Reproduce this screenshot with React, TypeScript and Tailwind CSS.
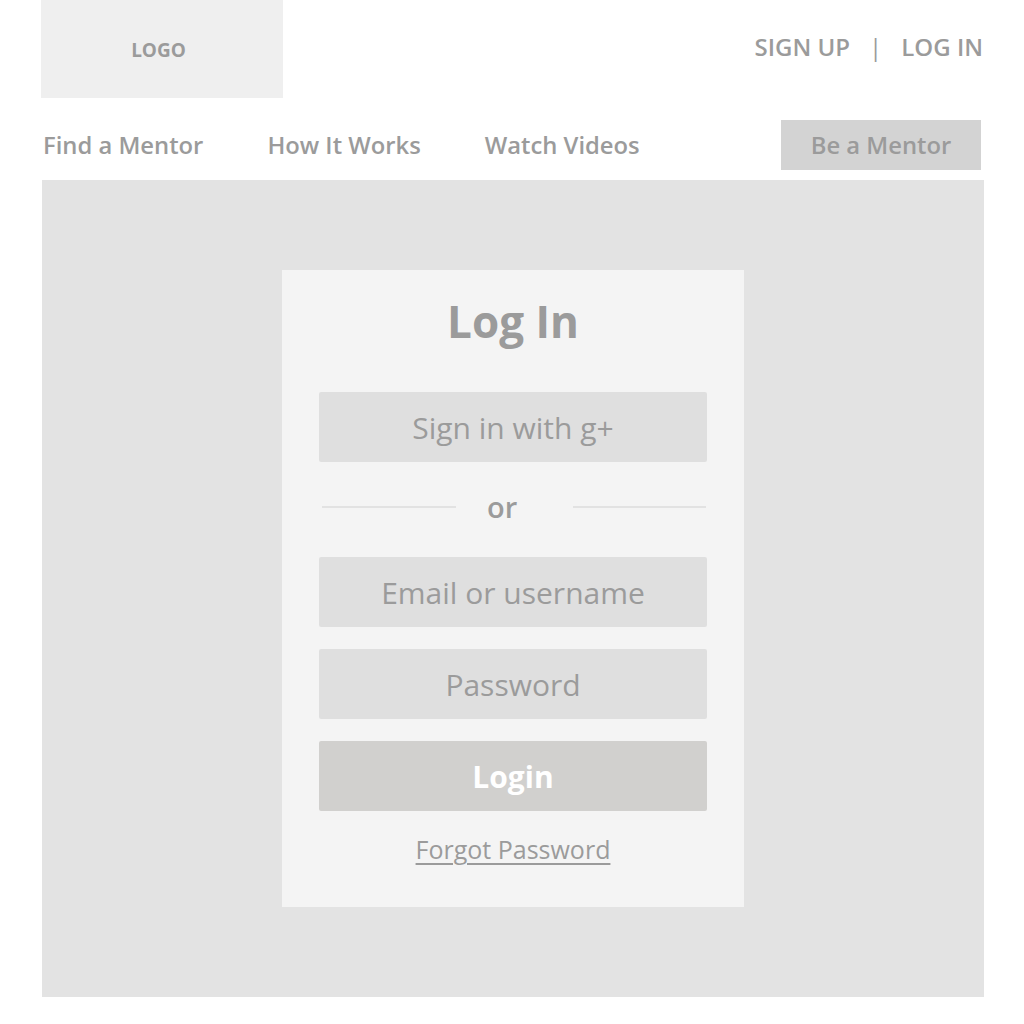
import React from 'react';

const font = { fontFamily: '"Open Sans", "Liberation Sans", sans-serif' };

const Field: React.FC<{ label: string }> = ({ label }) => (
  <div className="h-[70px] w-full bg-[#dfdfdf] rounded-[2px] flex items-center justify-center text-[30px] text-[#9b9b9b]">
    {label}
  </div>
);

export default function App() {
  return (
    <div className="min-h-[1024px] bg-white" style={font}>
      <div className="ml-[41px] w-[943px]">
        {/* top bar */}
        <header className="flex items-start justify-between">
          <div className="w-[242px] h-[98px] bg-[#efefef] flex items-center justify-center pr-[7px]">
            <span className="text-[19px] font-bold text-[#9b9b9b] pt-[2px]">LOGO</span>
          </div>
          <div className="flex items-center gap-[19px] h-[94px] mr-[1px] text-[24px] font-semibold text-[#9b9b9b]">
            <a>SIGN UP</a>
            <span className="font-normal">|</span>
            <a>LOG IN</a>
          </div>
        </header>

        {/* nav */}
        <nav className="mt-[22px] mb-[10px] h-[50px] flex items-center justify-between text-[23.8px] font-semibold text-[#9b9b9b]">
          <div className="flex items-center gap-[64px] pl-[2px] pt-[1px]">
            <a>Find a Mentor</a>
            <a>How It Works</a>
            <a>Watch Videos</a>
          </div>
          <button className="w-[200px] h-[50px] mr-[3px] pt-[1px] bg-[#d3d3d3] text-[#9b9b9b] font-semibold">
            Be a Mentor
          </button>
        </nav>

        {/* main */}
        <main className="ml-[1px] bg-[#e3e3e3] py-[90px] flex justify-center">
          <div className="w-[462px] h-[637px] bg-[#f4f4f4] px-[37px] flex flex-col">
            <h1 className="text-center text-[44px] font-bold text-[#9b9b9b] leading-none mt-[29px]">Log In</h1>
            <div className="mt-[49px]">
              <Field label="Sign in with g+" />
            </div>
            <div className="mt-[29px] h-[30px] flex items-center">
              <div className="ml-[3px] w-[134px] h-[2px] bg-[#e2e2e2] mt-[2px]" />
              <span className="ml-[31px] text-[29px] font-semibold text-[#9b9b9b] leading-none">or</span>
              <div className="ml-auto mr-[1px] w-[133px] h-[2px] bg-[#e2e2e2] mt-[2px]" />
            </div>
            <div className="mt-[36px] flex flex-col gap-[22px]">
              <Field label="Email or username" />
              <Field label="Password" />
              <button className="h-[70px] w-full bg-[#d1d0ce] rounded-[2px] text-[30px] font-bold text-white">
                Login
              </button>
            </div>
            <a className="mt-[20px] self-center text-[25px] text-[#9b9b9b] underline underline-offset-[4px] decoration-[2px]">
              Forgot Password
            </a>
          </div>
        </main>
      </div>
    </div>
  );
}
